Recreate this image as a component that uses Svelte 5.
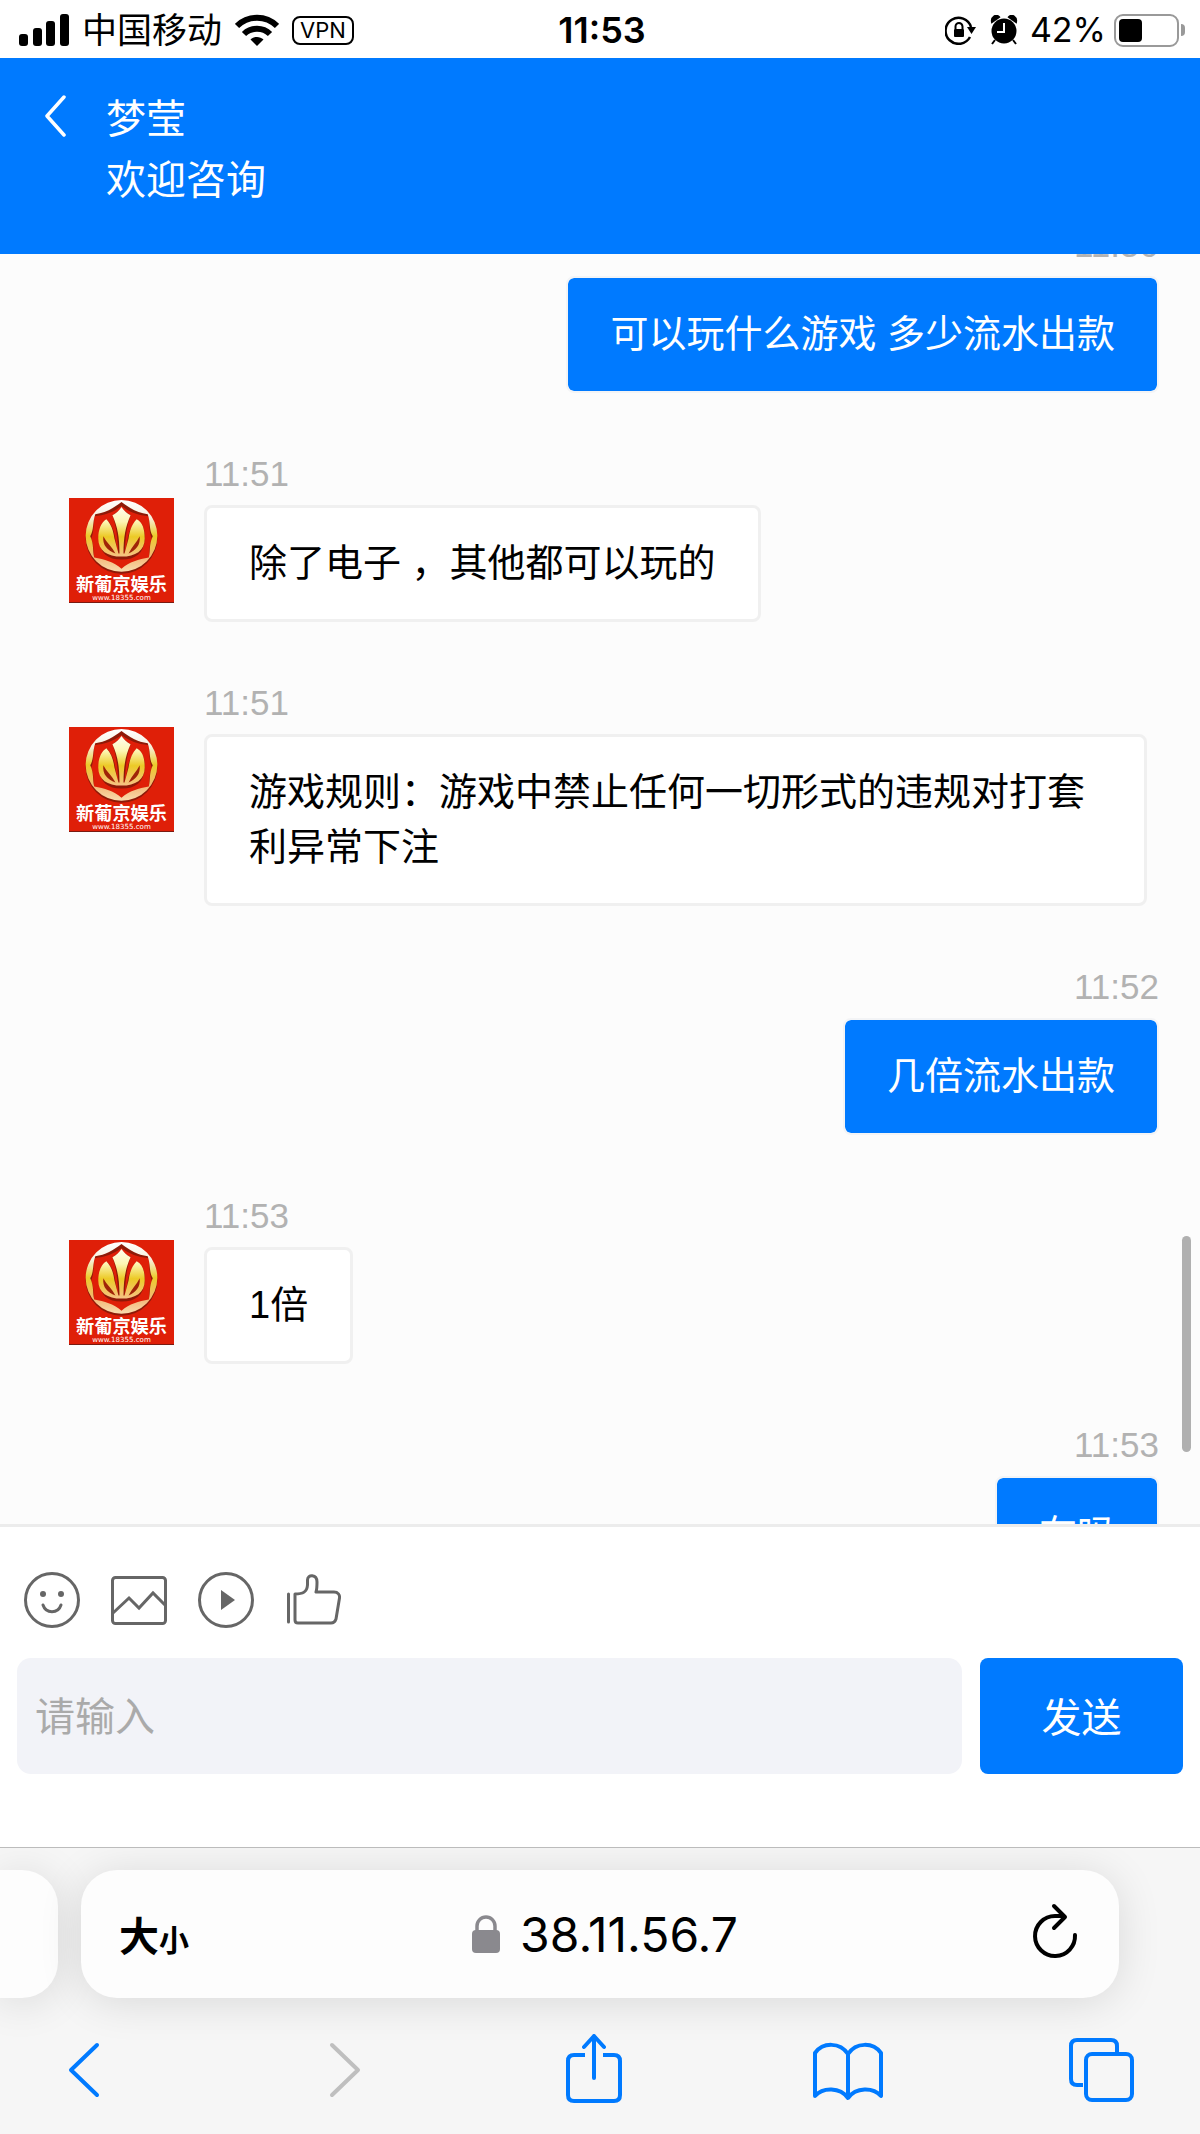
<script lang="ts">
	interface Message {
		id: number;
		time: string;
		text: string;
		mine: boolean;
	}

	const messages: Message[] = [
		{ id: 1, time: '11:50', text: '可以玩什么游戏 多少流水出款', mine: true },
		{ id: 2, time: '11:51', text: '除了电子 ，其他都可以玩的', mine: false },
		{ id: 3, time: '11:51', text: '游戏规则：游戏中禁止任何一切形式的违规对打套利异常下注', mine: false },
		{ id: 4, time: '11:52', text: '几倍流水出款', mine: true },
		{ id: 5, time: '11:53', text: '1倍', mine: false },
		{ id: 6, time: '11:53', text: '在吗', mine: true }
	];

	const battery = 42;
	let draft = $state('');

	function send() {
		draft = '';
	}
</script>

{#snippet avatar()}
	<svg class="avatar" viewBox="0 0 104 104" role="img" aria-label="新葡京娱乐">
		<defs>
			<linearGradient id="gold" x1="0" y1="0" x2="0" y2="1">
				<stop offset="0" stop-color="#fffef0" />
				<stop offset="0.3" stop-color="#fdf6b4" />
				<stop offset="0.6" stop-color="#ecca26" />
				<stop offset="1" stop-color="#f6c284" />
			</linearGradient>
			<linearGradient id="ring" x1="0" y1="0" x2="0" y2="1">
				<stop offset="0" stop-color="#ffffff" />
				<stop offset="0.25" stop-color="#f7efdc" />
				<stop offset="0.5" stop-color="#eccb2a" />
				<stop offset="0.8" stop-color="#f3b878" />
				<stop offset="1" stop-color="#f9dcae" />
			</linearGradient>
		</defs>
		<rect width="104" height="104" fill="#df1f08" />
		<rect y="103" width="104" height="1" fill="#7a1a10" />
		<path fill="#8e1a08" fill-rule="evenodd" d="M52 4a35 35 0 1 0 0 71a35 35 0 1 0 0-71zM52 8C60 14 68 17 79 18C80 26 79 33 82 40C79 47 80 54 79 61C68 62 60 66 52 71C44 66 36 62 25 61C24 54 25 47 22 40C25 33 24 26 25 18C36 17 44 14 52 8z" />
		<path fill="url(#ring)" fill-rule="evenodd" d="M52 2a35 35 0 1 0 0 71a35 35 0 1 0 0-71zM52 4C60 10 68 15 78 16C81 25 79 31 83 38C79 46 81 52 79 59C69 61 60 63 52 70C44 63 35 61 25 59C23 52 25 46 21 38C25 31 23 25 26 16C36 15 44 10 52 4z" />
		<path fill="#8e1a08" d="M30 42C29 32 33 25 38 22C43 27 45 34 46 41L49 57C48 39 47 28 43 17L52 11L61 17C57 28 56 39 55 57L58 41C59 34 62 27 68 22C73 25 76 33 75 42C74 54 66 61 52 61C38 61 31 54 30 42z" />
		<path fill="url(#gold)" d="M29 40C29 31 32 24 37 21C42 26 44 33 45 40L49 55L50 55C50 39 48 28 43 17C47 15 50 12 52 9C54 12 57 15 61 17C56 28 54 39 54 55L55 55L59 40C60 33 62 26 67 21C73 24 75 31 75 40C75 52 66 58 52 58C38 58 29 52 29 40z" />
		<path fill="#a02408" d="M34 38C37 44 43 49 46 55C38 52 33 47 34 38zM70 38C67 44 62 49 59 55C66 52 71 47 70 38z" />
		<text class="avatar-name" x="52" y="92" text-anchor="middle">新葡京娱乐</text>
		<text class="avatar-site" x="52" y="101" text-anchor="middle">www.18355.com</text>
	</svg>
{/snippet}

<div class="screen">
	<div class="status-bar">
		<div class="status-side">
			<svg width="50" height="32" viewBox="0 0 50 32" aria-hidden="true">
				<rect x="0" y="20" width="9" height="12" rx="3" />
				<rect x="14" y="14" width="9" height="18" rx="3" />
				<rect x="27" y="7" width="9" height="25" rx="3" />
				<rect x="41" y="0" width="9" height="32" rx="3" />
			</svg>
			<span class="carrier">中国移动</span>
			<svg width="44" height="32" viewBox="0 0 44 32" aria-hidden="true">
				<path d="M22 32L15.5 25.5C19 22 25 22 28.5 25.5z" />
				<path d="M2 12C13 1 31 1 42 12" fill="none" stroke="#000" stroke-width="6" />
				<path d="M9 20C16 13 28 13 35 20" fill="none" stroke="#000" stroke-width="6" />
			</svg>
			<span class="vpn">VPN</span>
		</div>
		<span class="clock">11:53</span>
		<div class="status-side end">
			<svg width="31" height="30" viewBox="0 0 31 30" aria-hidden="true">
				<path d="M25 22A13 13 0 1 1 26 12" fill="none" stroke="#000" stroke-width="2.5" />
				<path d="M22 12H31L26.5 19z" />
				<rect x="9" y="14" width="10" height="8" rx="1" />
				<path d="M10.5 14V11.5a3.5 3.5 0 0 1 7 0V14" fill="none" stroke="#000" stroke-width="2" />
			</svg>
			<svg class="alarm" width="28" height="30" viewBox="0 0 28 30" aria-hidden="true">
				<circle cx="14" cy="16" r="12.5" />
				<path d="M2 7C1 2 6-1 9 2zM26 7C27 2 22-1 19 2zM5 25L2 29M23 25L26 29" stroke="#000" stroke-width="2" />
				<path d="M14 8V17H7" fill="none" stroke="#fff" stroke-width="2" />
			</svg>
			<span class="percent">{battery}%</span>
			<div class="battery"><div class="battery-level" style="width: {battery}%"></div></div>
			<div class="battery-tip"></div>
		</div>
	</div>

	<header class="chat-header">
		<button class="back" aria-label="返回">
			<svg width="22" height="42" viewBox="0 0 22 42" fill="none">
				<path d="M20 2L3 21L20 40" stroke="#fff" stroke-width="3.5" stroke-linecap="round" stroke-linejoin="round" />
			</svg>
		</button>
		<div class="agent">
			<div>梦莹</div>
			<div>欢迎咨询</div>
		</div>
	</header>

	<main class="chat">
		<div class="messages">
			{#each messages as message (message.id)}
				<div class="message" class:mine={message.mine}>
					{#if !message.mine}
						{@render avatar()}
					{/if}
					<div class="body">
						<div class="time">{message.time}</div>
						<div class="bubble">{message.text}</div>
					</div>
				</div>
			{/each}
		</div>
		<div class="scroll-thumb"></div>
	</main>

	<section class="composer">
		<div class="tools">
			<button aria-label="表情">
				<svg viewBox="0 0 56 56">
					<circle cx="28" cy="28" r="26.5" />
					<circle class="solid" cx="19" cy="22" r="3" />
					<circle class="solid" cx="37" cy="22" r="3" />
					<path d="M19 33C22 42 34 42 37 33" stroke-linecap="round" />
				</svg>
			</button>
			<button aria-label="图片">
				<svg viewBox="0 0 56 56">
					<rect x="1.5" y="5.5" width="53" height="46" rx="3" />
					<path d="M2 41L18 26L28 36L42 21L54 33" />
				</svg>
			</button>
			<button aria-label="视频">
				<svg viewBox="0 0 56 56">
					<circle cx="28" cy="28" r="26.5" />
					<path class="solid" d="M23 18L37 28L23 38z" />
				</svg>
			</button>
			<button aria-label="评价">
				<svg viewBox="0 0 56 56">
					<path d="M3.5 22V50" stroke-linecap="round" />
					<path d="M10 22C18 22 22 20 22.500 13V8C22.500 2 32 2 32 10C32 14 32 17 31 20H49C53 20 55 23 54.500 26L51 47C50 50 49 51 46 51H13C11 51 10 50 10 48z" stroke-linejoin="round" />
				</svg>
			</button>
		</div>
		<form class="entry" onsubmit={(e) => { e.preventDefault(); send(); }}>
			<input type="text" aria-label="请输入" placeholder="请输入" bind:value={draft} />
			<button type="submit">发送</button>
		</form>
	</section>

	<footer class="browser">
		<div class="tabs">
			<div class="tab-previous"></div>
			<div class="address">
				<button class="text-size" aria-label="大小">大<small>小</small></button>
				<a class="host" href="#top">
					<svg width="28" height="38" viewBox="0 0 28 38" aria-hidden="true">
						<rect y="15" width="28" height="23" rx="4" fill="#8a898e" />
						<path d="M5 17V11a9 9 0 0 1 18 0V17" fill="none" stroke="#8a898e" stroke-width="3.5" />
					</svg>
					38.11.56.7
				</a>
				<button class="reload" aria-label="重新载入">
					<svg width="46" height="54" viewBox="0 0 46 54" fill="none" stroke="#000" stroke-width="4" stroke-linecap="round" stroke-linejoin="round">
						<path d="M43 28A20 20 0 1 1 23 9H31" />
						<path d="M22 -1L33 10L22 21" />
					</svg>
				</button>
			</div>
		</div>
		<nav class="toolbar">
			<button aria-label="后退">
				<svg viewBox="0 0 72 72"><path d="M49 11L23 36L49 61" /></svg>
			</button>
			<button class="disabled" aria-label="前进" disabled>
				<svg viewBox="0 0 72 72"><path d="M30 11L56 36L30 61" /></svg>
			</button>
			<button aria-label="共享">
				<svg viewBox="0 0 72 72">
					<path d="M28 21H17C13 21 11 23 11 27V61C11 65 13 67 17 67H57C61 67 63 65 63 61V27C63 23 61 21 57 21H46" stroke-linecap="butt" />
					<path d="M37 44V2M27 13L37 2L47 13" />
				</svg>
			</button>
			<button aria-label="书签">
				<svg viewBox="0 0 72 72">
					<path d="M37 20C29 8 12 8 4 19V62C12 53 29 53 37 64C45 53 62 53 70 62V19C62 8 45 8 37 20V63" />
				</svg>
			</button>
			<button aria-label="标签页">
				<svg viewBox="0 0 72 72">
					<path d="M18 51H12C8 51 6 49 6 45V12C6 8 8 6 12 6H46C50 6 52 8 52 12V18" stroke-linecap="butt" />
					<rect x="21" y="20" width="46" height="46" rx="6" />
				</svg>
			</button>
		</nav>
	</footer>
</div>

<style>
	:global(body) {
		margin: 0;
	}

	.screen {
		display: flex;
		flex-direction: column;
		height: 100vh;
		overflow: hidden;
		background: #fff;
		color: #000;
		font-family: Inter, 'Noto Sans CJK SC', sans-serif;
	}

	button {
		border: none;
		padding: 0;
		background: none;
		color: inherit;
		font-family: inherit;
		cursor: pointer;
	}

	svg {
		display: block;
		flex: none;
	}

	.status-bar {
		display: flex;
		flex: none;
		align-items: center;
		box-sizing: border-box;
		height: 58px;
		padding: 2px 15px 0 19px;
		font-size: 35px;
		line-height: 40px;
	}

	.status-side {
		display: flex;
		flex: 1;
		align-items: center;
		gap: 13px;
	}

	.status-side.end {
		justify-content: flex-end;
		gap: 0;
	}

	.vpn {
		padding: 0 6px;
		border: 2px solid #000;
		border-radius: 8px;
		font-size: 22px;
		line-height: 25px;
	}

	.clock {
		font-size: 36px;
		font-weight: 600;
	}

	.alarm {
		margin: 0 12px 0 14px;
	}

	.percent {
		font-size: 34px;
	}

	.battery {
		box-sizing: border-box;
		width: 65px;
		height: 33px;
		margin: 0 2px 0 8px;
		padding: 3px;
		border: 2px solid #999;
		border-radius: 9px;
	}

	.battery-level {
		height: 100%;
		border-radius: 4px;
		background: #000;
	}

	.battery-tip {
		width: 4px;
		height: 12px;
		border-radius: 0 4px 4px 0;
		background: #999;
	}

	.chat-header {
		display: flex;
		flex: none;
		align-items: flex-start;
		gap: 40px;
		padding: 30px 44px 44px;
		background: #007aff;
		color: #fff;
		font-size: 40px;
		line-height: 61px;
	}

	.back {
		padding-top: 7px;
	}

	.chat {
		position: relative;
		flex: 1;
		min-height: 0;
		overflow: hidden;
		background: #fcfcfc;
	}

	/* scrolled so that the first time stamp slips under the header */
	.messages {
		display: flex;
		flex-direction: column;
		gap: 61px;
		margin-top: -29px;
		padding: 0 41px 0 69px;
	}

	.message {
		display: flex;
		align-items: flex-start;
		gap: 30px;
	}

	.message.mine {
		justify-content: flex-end;
	}

	.avatar {
		width: 105px;
		height: 105px;
		margin-top: 44px;
	}

	.avatar-name {
		fill: #fff;
		font-size: 18px;
		font-weight: 700;
	}

	.avatar-site {
		fill: #fff;
		font-family: 'DejaVu Sans', sans-serif;
		font-size: 7px;
	}

	.body {
		display: flex;
		flex-direction: column;
		align-items: flex-start;
		max-width: 943px;
	}

	.mine .body {
		align-items: flex-end;
	}

	.time {
		margin-bottom: 11px;
		color: #b2b2b2;
		font-family: 'Liberation Sans', sans-serif;
		font-size: 35px;
		line-height: 40px;
	}

	.bubble {
		box-sizing: border-box;
		padding: 28px 42px;
		border: 3px solid #f0f0f0;
		border-radius: 8px;
		background: #fff;
		font-family: 'Liberation Sans', 'Noto Sans CJK SC', sans-serif;
		font-size: 38px;
		line-height: 55px;
	}

	.mine .bubble {
		padding: 29px 42px;
		border: 2px solid #f3f4f6;
		background: #007aff;
		background-clip: padding-box;
		color: #fff;
	}

	.scroll-thumb {
		position: absolute;
		top: 77.3%;
		right: 9px;
		width: 9px;
		height: 17%;
		border-radius: 5px;
		background: #b0b0b0;
	}

	.composer {
		flex: none;
		padding: 45px 17px 73px;
		border-top: 3px solid #ececec;
	}

	.tools {
		display: flex;
		gap: 31px;
		padding: 0 7px 30px;
	}

	.tools svg {
		width: 56px;
		height: 56px;
		fill: none;
		stroke: #666;
		stroke-width: 3;
	}

	.tools .solid {
		fill: #666;
		stroke: none;
	}

	.entry {
		display: flex;
		gap: 18px;
		height: 116px;
	}

	.entry input {
		flex: 1;
		min-width: 0;
		padding: 0 18px;
		border: none;
		border-radius: 14px;
		outline: none;
		background: #f2f3f8;
		font-family: inherit;
		font-size: 40px;
	}

	.entry input::placeholder {
		color: #aaa;
		opacity: 1;
	}

	.entry button {
		width: 203px;
		padding-bottom: 3px;
		border-radius: 8px;
		background: #007aff;
		color: #fff;
		font-size: 40px;
	}

	.browser {
		flex: none;
		border-top: 1px solid #bcbcbc;
		background: #f6f6f6;
		overflow: hidden;
	}

	.tabs {
		display: flex;
		gap: 23px;
		height: 128px;
		padding: 22px 81px 36px 0;
	}

	.tab-previous,
	.address {
		background: #fdfdfd;
		box-shadow: 0 4px 44px rgba(0, 0, 0, 0.12);
	}

	.tab-previous {
		width: 58px;
		border-radius: 0 36px 36px 0;
	}

	.address {
		display: grid;
		flex: 1;
		grid-template-columns: 1fr auto 1fr;
		align-items: center;
		padding: 0 28px 0 38px;
		border-radius: 36px;
	}

	.text-size {
		justify-self: start;
		font-size: 40px;
		font-weight: 700;
	}

	.text-size small {
		font-size: 30px;
	}

	.host {
		display: flex;
		align-items: center;
		gap: 20px;
		color: #000;
		font-size: 48px;
		text-decoration: none;
	}

	.reload {
		justify-self: end;
		padding-right: 13px;
	}

	.reload svg {
		overflow: visible;
	}

	.toolbar {
		display: flex;
		justify-content: space-between;
		padding: 0 63px 28px 48px;
	}

	.toolbar svg {
		width: 72px;
		height: 72px;
		fill: none;
		stroke: #007aff;
		stroke-width: 4;
		stroke-linecap: round;
		stroke-linejoin: round;
	}

	.toolbar .disabled svg {
		stroke: #bfbfbf;
	}
</style>
